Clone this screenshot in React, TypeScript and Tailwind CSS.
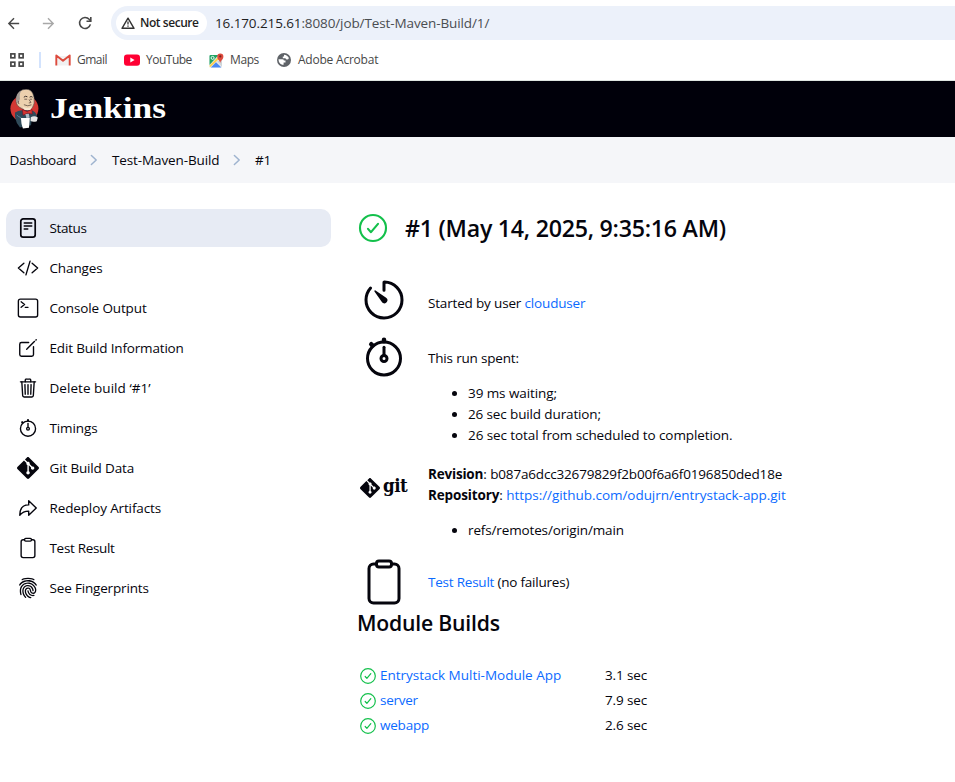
import type { ReactNode } from "react";
import {
  IoArrowRedoOutline,
  IoClipboardOutline,
  IoCodeSlashOutline,
  IoCreateOutline,
  IoFingerPrint,
  IoStopwatchOutline,
  IoTerminalOutline,
  IoTimerOutline,
  IoTrashOutline,
} from "react-icons/io5";
import { SiGit } from "react-icons/si";
import { MdArrowBack, MdArrowForward } from "react-icons/md";

function StatusIcon() {
  return (
    <svg viewBox="0 0 22 22" className="size-[22px]" fill="none" stroke="currentColor" strokeWidth="1.7" strokeLinecap="round">
      <rect x="3.8" y="1.8" width="14.4" height="18.4" rx="2.4" />
      <path d="M7.2 6h7.6M7.2 9h7.6M7.2 12h3.6" strokeWidth="1.4" />
    </svg>
  );
}

function SuccessIcon({ className }: { className: string }) {
  return (
    <svg viewBox="0 0 512 512" className={`text-[#13c04b] ${className}`} fill="none" stroke="currentColor" strokeWidth="34" strokeLinecap="round" strokeLinejoin="round">
      <circle cx="256" cy="256" r="208" />
      <path d="M336 189 224 323l-48-53" />
    </svg>
  );
}

function ReloadIcon() {
  return (
    <svg viewBox="0 0 14 14" className="size-[14px]" fill="none" stroke="#474747" strokeWidth="1.6">
      <path d="M12.4 8.4a5.5 5.5 0 1 1-1.2-5.1l1.5 1.6" />
      <path d="M12.8 1v4.3H8.5" />
    </svg>
  );
}

function WarningIcon() {
  return (
    <svg viewBox="0 0 14 12" className="h-3 w-[14px]" fill="none" stroke="#333" strokeWidth="1.4">
      <path d="M7 1.2 13 11.3H1Z" strokeLinejoin="round" />
      <path d="M7 4.6v3M7 8.4v1.4" strokeWidth="1.3" />
    </svg>
  );
}

function AppsIcon() {
  return (
    <svg viewBox="0 0 14 14" className="size-[14px]" fill="none" stroke="#474747" strokeWidth="1.7">
      <rect x=".9" y=".9" width="3.9" height="3.9" />
      <rect x="9.2" y=".9" width="3.9" height="3.9" />
      <rect x=".9" y="9.2" width="3.9" height="3.9" />
      <rect x="9.2" y="9.2" width="3.9" height="3.9" />
    </svg>
  );
}

function GmailIcon() {
  return (
    <svg viewBox="0 0 16 12" className="h-3 w-4">
      <path d="M2 2h12v9.5H2z" fill="#f1f1f1" />
      <path d="M1.3 11.5V1.4L8 6.8l6.7-5.4v10.1" fill="none" stroke="#dd4b3e" strokeWidth="1.9" strokeLinejoin="round" />
    </svg>
  );
}

function YouTubeIcon() {
  return (
    <svg viewBox="0 0 16 12" className="h-3 w-4">
      <rect y=".4" width="16" height="11.4" rx="3" fill="#ff0033" />
      <path d="M6.3 3.6v5L10.6 6z" fill="#fff" />
    </svg>
  );
}

function MapsIcon() {
  return (
    <svg viewBox="0 0 15 15" className="size-[15px]">
      <rect x=".5" y="2" width="12.5" height="12.5" rx="1" fill="#e7eaed" />
      <path d="M.5 3q0-1 1-1h8L.5 12z" fill="#1fa463" />
      <path d="M.5 12.4 8.6 4.4 10 6 .9 14.4z" fill="#ffd04b" />
      <path d="M1.8 14.5 7 9.3l5.4 5.2z" fill="#4a89f3" />
      <path d="M8 8.4 13 13.6V7z" fill="#cfd4d8" />
      <circle cx="3.6" cy="4.9" r="1.5" fill="none" stroke="#fff" strokeWidth=".9" />
      <path d="M11.2 10C10.8 7.4 8.2 6.6 8.2 3.5a3.1 3.1 0 0 1 6.2 0c0 3.1-2.6 3.9-3.2 6.5z" fill="#dd4b3e" />
      <circle cx="11.3" cy="3.4" r="1.1" fill="#7b231b" />
    </svg>
  );
}

function GlobeIcon() {
  return (
    <svg viewBox="0 0 14 14" className="size-[14px]">
      <circle cx="7" cy="7" r="7" fill="#5f6368" />
      <path d="M1.5 6.2h3.8q1.5 0 1.6 1.4h1.6v2H6.6v2.2H5.2Q1.6 10.6 1.5 6.2zM7 1.7q3.5.2 4.9 3.3-.6 2-2.4 1.5L8.3 5.2H5.8V3.4H7z" fill="#fff" />
    </svg>
  );
}

function JenkinsHead() {
  return (
    <svg viewBox="0 0 30 40" className="h-10 w-[30px]">
      <ellipse cx="14.4" cy="19.6" rx="14" ry="13.6" fill="#d33833" />
      <path d="M5 23.4Q8 21.4 12 21.2h9q5 1.2 6 5.8l-1.6 4.5-3.9.8-.5 4-11 2.3q-4-4.6-5-10.4z" fill="#2f4a5a" />
      <path d="M6.2 13Q5.6 3.6 12.6.8q7.4-2 10.2 3.6 1.8 3.4 1.4 9.7-.8 5.4-5.2 6.9-5 .9-9.4-2.7-3-1.8-3.4-5.3z" fill="#ecd0ae" stroke="#4e4b4d" strokeWidth=".6" />
      <path d="M6.2 12.6Q5.6 4.4 11.6 1.3q-2.7 3.9-1.7 8.5L8.4 14.6z" fill="#a39a94" />
      <path d="M13.8 8.2q1.8-1.7 3.6-.4M19.6 8.2q1.5-1.4 3 0" fill="none" stroke="#3a302d" strokeWidth="1" />
      <path d="M14.3 10.2h2.9M19.8 10.2h2.4M19 10.5l2 3-2.2.5M13.9 15.7q3.9 2.2 7.6.1M8.6 12.2q-.8 1.6.5 2.9" fill="none" stroke="#5c4a40" strokeWidth=".8" />
      <path d="M12.4 17.2Q17 20.6 22 17.4L20.6 21h-6z" fill="#f7e4cd" />
      <path d="m12.3 20.6 4.8 2 4.8-2.2.4 4.7-4.8-.9-4.4 2z" fill="#d33833" stroke="#81001c" strokeWidth=".5" />
      <path d="m15.4 25 3.4-.2.8 4-3.2.2z" fill="#aab9c4" />
      <path d="M10.9 28.9h8.9l-.8 9.8-6.1.8q-1.7-4-2-10.6z" fill="#fff" />
      <path d="M20.8 28.2q3.4-2.2 7 .2l-1 3.8q-3.5 1.2-6.2-.2z" fill="#e6e6e6" />
      <path d="M6.8 26q1.3 1.7 4.3 2.7" stroke="#6b8da3" strokeWidth=".8" fill="none" />
    </svg>
  );
}

function Chevron() {
  return (
    <svg viewBox="0 0 8 12" className="h-3 w-2" fill="none" stroke="#9eb3cf" strokeWidth="1.5" strokeLinecap="round" strokeLinejoin="round">
      <path d="M1.4 1.5 6.2 6l-4.8 4.5" />
    </svg>
  );
}

const tasks: { label: string; icon: ReactNode; spacing: string }[] = [
  { label: "Status", icon: <StatusIcon />, spacing: "tracking-[-0.37px]" },
  { label: "Changes", icon: <IoCodeSlashOutline />, spacing: "tracking-[-0.13px]" },
  { label: "Console Output", icon: <IoTerminalOutline />, spacing: "tracking-[-0.13px]" },
  { label: "Edit Build Information", icon: <IoCreateOutline />, spacing: "tracking-[-0.17px]" },
  { label: "Delete build ‘#1’", icon: <IoTrashOutline />, spacing: "tracking-[0.04px]" },
  { label: "Timings", icon: <IoStopwatchOutline />, spacing: "tracking-[-0.11px]" },
  { label: "Git Build Data", icon: <SiGit />, spacing: "tracking-[-0.16px]" },
  { label: "Redeploy Artifacts", icon: <IoArrowRedoOutline />, spacing: "tracking-[-0.13px]" },
  { label: "Test Result", icon: <IoClipboardOutline />, spacing: "tracking-[-0.32px]" },
  { label: "See Fingerprints", icon: <IoFingerPrint />, spacing: "tracking-[-0.17px]" },
];

const modules = [
  { name: "Entrystack Multi-Module App", time: "3.1 sec", spacing: "tracking-[-0.01px]" },
  { name: "server", time: "7.9 sec", spacing: "tracking-[-0.26px]" },
  { name: "webapp", time: "2.6 sec", spacing: "tracking-[-0.21px]" },
];

function Bookmark({ icon, label, className }: { icon: ReactNode; label: string; className: string }) {
  return (
    <div className={`flex items-center ${className}`}>
      {icon}
      <span>{label}</span>
    </div>
  );
}

function BrowserBar() {
  return (
    <div className="h-[81px] border-b border-[#dfe6e2] bg-white">
      <div className="flex h-[46px] items-center">
        <MdArrowBack className="ml-[5px] size-[17px] text-[#474747]" />
        <MdArrowForward className="ml-[18px] size-[17px] text-[#a8a8a8]" />
        <span className="ml-[21px]">
          <ReloadIcon />
        </span>
        <div className="ml-[19px] flex h-[34px] flex-1 items-center rounded-l-full bg-[#ecf1fa] pl-[5px]">
          <div className="flex h-6 w-[91px] items-center gap-[5px] rounded-full bg-white pl-[5px]">
            <WarningIcon />
            <span className="whitespace-nowrap text-[12px] font-semibold tracking-[-0.45px] text-[#1f1f1f]">Not secure</span>
          </div>
          <span className="ml-[8px] text-[13.5px] tracking-[-0.11px] whitespace-nowrap text-[#4a4d51]">
            <span className="text-[#1f1f1f]">16.170.215.61</span>:8080/job/Test-Maven-Build/1/
          </span>
        </div>
      </div>
      <div className="flex h-7 items-center text-[12px] whitespace-nowrap text-[#474747]">
        <div className="flex w-10 items-center pl-[10px]">
          <AppsIcon />
        </div>
        <div className="-ml-px h-4 w-[2px] bg-[#d3e3fd]" />
        <Bookmark icon={<GmailIcon />} label="Gmail" className="ml-[14px] w-[69px] gap-[6px] tracking-[-0.5px]" />
        <Bookmark icon={<YouTubeIcon />} label="YouTube" className="w-[85px] gap-[6px] tracking-[-0.5px]" />
        <Bookmark icon={<MapsIcon />} label="Maps" className="w-[68px] gap-[6px] tracking-[-0.4px]" />
        <Bookmark icon={<GlobeIcon />} label="Adobe Acrobat" className="gap-[7px] tracking-[-0.22px]" />
      </div>
    </div>
  );
}

function Sidebar() {
  return (
    <nav className="mt-[26px] ml-[6px] flex w-[325px] shrink-0 flex-col gap-[2px]">
      {tasks.map((task, i) => (
        <a key={task.label} className={`flex h-[38px] items-center gap-[10.5px] rounded-[10px] pl-[11px] ${i === 0 ? "bg-[#e7ebf4]" : ""}`}>
          <span className="text-[22px]">{task.icon}</span>
          <span className={task.spacing}>{task.label}</span>
        </a>
      ))}
    </nav>
  );
}

const link = "text-[#0b6aff]";

function Main() {
  return (
    <main className="ml-[27px] flex-1 whitespace-nowrap">
      <div className="mt-[26px] flex h-[38px] items-center">
        <SuccessIcon className="-ml-[1px] size-8" />
        <h1 className="ml-[16px] text-[23.2px] font-semibold tracking-[-0.25px]">#1 (May 14, 2025, 9:35:16 AM)</h1>
      </div>

      <section className="mt-[29px] grid grid-cols-[70px_1fr]">
        <IoTimerOutline className="ml-[2px] size-12" />
        <p className="pt-[17px] leading-[21px] tracking-[-0.17px]">
          Started by user <a className={link}>clouduser</a>
        </p>
      </section>

      <section className="mt-[9px] grid h-[131px] grid-cols-[70px_1fr]">
        <IoStopwatchOutline className="ml-[2px] size-12" />
        <div className="pt-[15px] leading-[21px]">
          <p className="tracking-[-0.18px]">This run spent:</p>
          <ul className="mt-[14px] list-disc pl-10">
            <li className="tracking-[-0.08px]">39 ms waiting;</li>
            <li className="tracking-[-0.13px]">26 sec build duration;</li>
            <li className="tracking-[-0.09px]">26 sec total from scheduled to completion.</li>
          </ul>
        </div>
      </section>

      <section className="grid h-[94px] grid-cols-[70px_1fr]">
        <div className="flex h-[48px] items-center self-start pl-[2px]">
          <SiGit className="size-5" />
          <span className="ml-[3px] -mt-[5px] font-['DejaVu_Serif_Condensed','DejaVu_Serif',serif] text-[18.5px] font-bold tracking-[-0.5px]">git</span>
        </div>
        <div className="leading-[21px]">
          <p>
            <b className="tracking-[-0.2px]">Revision</b>: <span className="tracking-[-0.17px]">b087a6dcc32679829f2b00f6a6f0196850ded18e</span>
          </p>
          <p>
            <b className="tracking-[-0.14px]">Repository</b>: <a className={`${link} tracking-[-0.05px]`}>https://github.com/odujrn/entrystack-app.git</a>
          </p>
          <ul className="mt-[14px] list-disc pl-10">
            <li className="tracking-[-0.14px]">refs/remotes/origin/main</li>
          </ul>
        </div>
      </section>

      <section className="grid h-[48px] grid-cols-[70px_1fr]">
        <IoClipboardOutline className="ml-[2px] size-12" />
        <p className="pt-[14px] leading-[21px] tracking-[-0.22px]">
          <a className={link}>Test Result</a> (no failures)
        </p>
      </section>

      <h2 className="-ml-px mt-[2px] text-[21.2px] leading-[30px] font-semibold tracking-[-0.2px]">Module Builds</h2>
      <div className="mt-[25px] ml-[1px]">
        {modules.map((m) => (
          <div key={m.name} className="flex h-[25px] items-center">
            <SuccessIcon className="size-[18px]" />
            <a className={`ml-[3px] w-[225px] ${link} ${m.spacing}`}>{m.name}</a>
            <span className="tracking-[-0.12px]">{m.time}</span>
          </div>
        ))}
      </div>
    </main>
  );
}

export default function App() {
  return (
    <div className="h-[782px] overflow-hidden bg-white font-['Open_Sans',sans-serif] text-[13.5px] text-[#05050d]">
      <BrowserBar />
      <header className="flex h-14 items-center bg-[#00000a] pl-[10px]">
        <JenkinsHead />
        <span className="-mt-px ml-[10px] origin-left scale-x-[1.2] font-['Liberation_Serif',serif] text-[29.5px] leading-none font-bold text-white">Jenkins</span>
      </header>
      <div className="flex h-[46px] items-center bg-[#f5f6f9] pl-[9.5px]">
        <span className="w-[80.5px] tracking-[-0.33px]">Dashboard</span>
        <Chevron />
        <span className="ml-[14px] w-[121px] tracking-[-0.12px]">Test-Maven-Build</span>
        <Chevron />
        <span className="ml-[14px] tracking-[-0.1px]">#1</span>
      </div>
      <div className="flex">
        <Sidebar />
        <Main />
      </div>
    </div>
  );
}
